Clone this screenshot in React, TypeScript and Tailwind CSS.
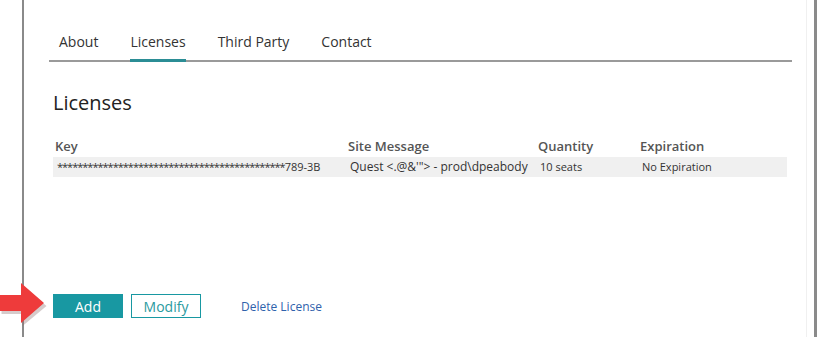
import React from "react";

const stars = "*".repeat(45);

export default function App() {
  return (
    <div
      className="relative h-[337px] w-[817px] overflow-hidden bg-white"
      style={{ fontFamily: '"Segoe UI", "Open Sans", sans-serif' }}
    >
      <div className="ml-[22px] flex h-full w-[795px] border-l-2 border-r-[3px] border-[#8a8a8a]">
        <div className="flex h-full w-[783px] flex-col border-r border-[#f0f0f0] pl-[25px]">
          {/* Tabs */}
          <div className="mt-[31px] flex w-[743px] gap-[32px] border-b-2 border-[#9a9a9a] pl-[10px] text-[14px] text-[#333]">
            <div className="pb-[8px]">About</div>
            <div className="-mb-[2px] border-b-[3px] border-[#2b8d95] pb-[7px]">Licenses</div>
            <div className="pb-[8px]">Third Party</div>
            <div className="pb-[8px]">Contact</div>
          </div>

          {/* Heading */}
          <div className="mt-[27px] pl-[4px] text-[20px] leading-[28px] text-[#222]">Licenses</div>

          {/* Table */}
          <div className="mt-[20px] w-[738px] pl-[4px]">
            <div className="grid grid-cols-[293px_190px_102px_1fr] text-[13px] font-semibold leading-[18px] text-[#555]">
              <div className="pl-[2px]">Key</div>
              <div className="pl-[2px]">Site Message</div>
              <div className="pl-[2px]">Quantity</div>
              <div className="pl-[2px]">Expiration</div>
            </div>
            <div className="mt-[2px] grid h-[20px] grid-cols-[293px_190px_102px_1fr] items-center bg-[#f0f0f0] text-[11px] text-[#333]">
              <div className="whitespace-nowrap pl-[4px]">
                <span className="tracking-[-1px]">{stars}</span>789-3B
              </div>
              <div className="whitespace-nowrap pl-[4px] text-[12px]">Quest &lt;.@&amp;'"&gt; - prod\dpeabody</div>
              <div className="pl-[4px]">10 seats</div>
              <div className="pl-[4px]">No Expiration</div>
            </div>
          </div>

          {/* Buttons */}
          <div className="mt-[117px] flex items-center pl-[4px]">
            <button className="h-[24px] w-[70px] bg-[#1898a2] text-[14px] text-white">Add</button>
            <button className="ml-[8px] h-[24px] w-[70px] border border-[#1898a2] text-[14px] text-[#2a9aa0]">
              Modify
            </button>
            <span className="ml-[40px] pt-[2px] text-[12px] text-[#2f62ac]">Delete License</span>
          </div>
        </div>
      </div>

      {/* Annotation arrow */}
      <svg
        className="absolute left-0 top-[281px]"
        width="52"
        height="48"
        viewBox="0 0 52 48"
      >
        <polygon
          points="0,15 21,15 21,3 45,23 21,43 21,31 0,31"
          fill="#8a6a6a"
          opacity="0.35"
          transform="translate(1.5,2)"
        />
        <polygon points="0,14 21,14 21,2 44,22 21,42 21,30 0,30" fill="#ee3b3b" />
      </svg>
    </div>
  );
}
